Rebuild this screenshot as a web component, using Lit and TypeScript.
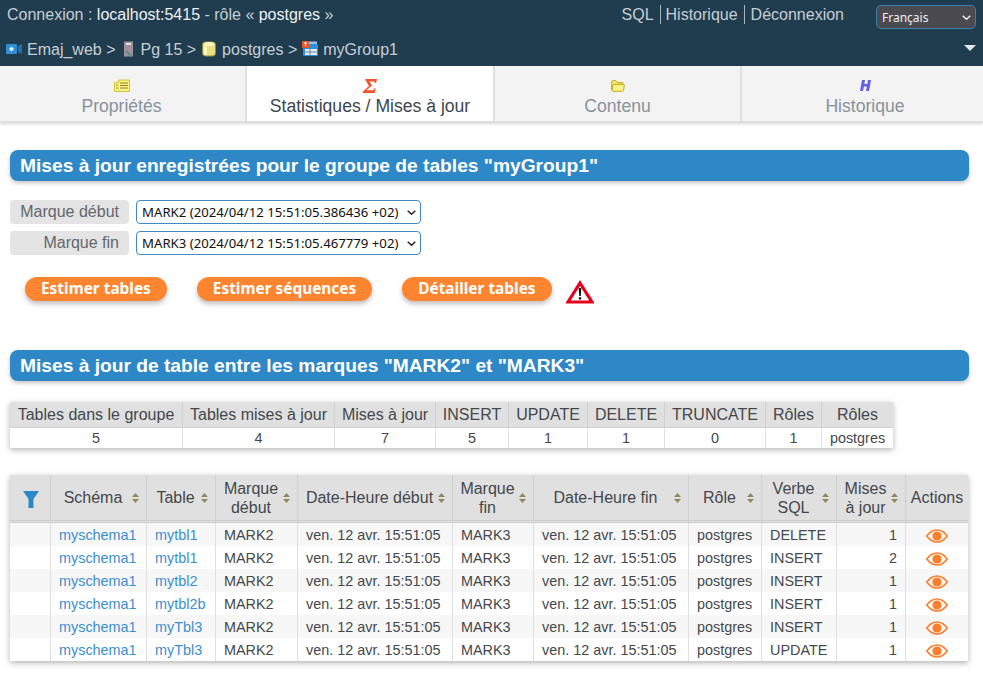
import { LitElement, html, css, svg } from 'lit';
import { customElement } from 'lit/decorators.js';

const summaryCols = [172, 152, 101, 73, 79, 77, 101, 56, 72];
const summaryHead = ['Tables dans le groupe', 'Tables mises à jour', 'Mises à jour', 'INSERT', 'UPDATE', 'DELETE', 'TRUNCATE', 'Rôles', 'Rôles'];
const summaryRow = ['5', '4', '7', '5', '1', '1', '0', '1', 'postgres'];

const detailCols = [40, 96, 69, 82, 155, 81, 155, 73, 75, 69, 63];
const rows = [
  ['mytbl1', 'DELETE', '1'],
  ['mytbl1', 'INSERT', '2'],
  ['mytbl2', 'INSERT', '1'],
  ['mytbl2b', 'INSERT', '1'],
  ['myTbl3', 'INSERT', '1'],
  ['myTbl3', 'UPDATE', '1'],
];

const sortIcon = svg`<svg class="sort" width="7" height="10" viewBox="0 0 7 10"><path d="M3.5 0 7 4H0ZM3.5 10 0 6H7Z" fill="#8f8a5e"/></svg>`;

const chevron = (color: string) => svg`<svg class="chev" width="9" height="5" viewBox="0 0 9 5"><path d="M0.7 0.7 4.5 4.2 8.3 0.7" fill="none" stroke=${color} stroke-width="1.5"/></svg>`;

const eye = svg`<svg width="22" height="14" viewBox="0 0 22 14"><path d="M0.8 7C4 2.6 7.3 1 11 1s7 1.6 10.2 6C18 11.4 14.7 13 11 13S4 11.4 0.8 7Z" fill="none" stroke="#fd7e2b" stroke-width="1.7"/><circle cx="11" cy="7" r="4.6" fill="#fd7e2b"/></svg>`;

@customElement('app-root')
export class AppRoot extends LitElement {
  static styles = css`
    :host {
      display: block;
      font-family: "Liberation Sans", Arial, sans-serif;
      color: #44484c;
      background: #fff;
      min-height: 677px;
    }
    .top {
      background: #203d50;
      height: 66px;
      box-sizing: border-box;
      color: #c6ced3;
      font-size: 16px;
      position: relative;
    }
    .line1 {
      display: flex;
      align-items: flex-start;
      height: 34px;
      padding: 5px 7px 0 7px;
      box-sizing: border-box;
    }
    .conn { flex: 1; line-height: 19px; }
    .conn b { font-weight: normal; color: #eef1f3; }
    .links {
      display: flex;
      line-height: 19px;
      margin-right: 32px;
    }
    .links span { padding: 0 6px 0 6px; }
    .links span + span { border-left: 1px solid #a9b4bb; padding-left: 5px; }
    .links span:last-child { padding-right: 0; padding-left: 6px; }
    .sel { position: relative; display: block; }
    .sel select {
      appearance: none;
      -webkit-appearance: none;
      display: block;
      font-family: "Noto Sans", sans-serif;
      box-sizing: border-box;
      padding: 0 0 0 5px;
    }
    .chev { position: absolute; right: 5px; top: 10px; pointer-events: none; }
    .lang select {
      width: 100px;
      height: 24px;
      background: #4a4a50;
      color: #f0f0f0;
      border: 1px solid #3f7fae;
      border-radius: 5px;
      font-size: 12px;
    }
    .crumbs {
      display: flex;
      align-items: center;
      height: 30px;
      padding-left: 6px;
      line-height: 19px;
    }
    .crumbs svg { flex: none; margin-right: 5px; }
    .crumbs span { margin-right: 5px; }
    .crumbs .pg { margin: 0 7px 0 2px; }
    .crumbs .db { margin: 0 6px 0 1px; }
    .collapse {
      position: absolute;
      right: 7px;
      top: 45px;
      width: 0;
      height: 0;
      border-left: 6px solid transparent;
      border-right: 6px solid transparent;
      border-top: 6px solid #e4e8ea;
    }
    .tabs {
      display: grid;
      grid-template-columns: 247px 248px 247px 1fr;
      height: 56px;
      background: #f3f3f3;
      border-bottom: 1px solid #e0e0e0;
      box-shadow: 0 2px 3px rgba(0, 0, 0, 0.16);
      box-sizing: border-box;
    }
    .tab {
      display: flex;
      flex-direction: column;
      align-items: center;
      font-size: 17.6px;
      color: #87929b;
      border-right: 2px solid #e0e0e0;
      padding-top: 9px;
      line-height: 21px;
    }
    .tab:first-child { padding-right: 2px; }
    .tab:last-child { border-right: none; padding-left: 5px; }
    .tab .ic { height: 21px; display: flex; align-items: center; }
    .tab.on { background: #fff; color: #3d4650; }
    .content { padding: 28px 14px 0 10px; }
    h2 {
      margin: 0;
      height: 31px;
      line-height: 31px;
      background: #2e88c7;
      color: #fff;
      font-size: 19.2px;
      font-weight: bold;
      border-radius: 8px;
      padding-left: 10px;
      box-shadow: 0 2px 4px rgba(0, 0, 0, 0.25);
    }
    .marks {
      display: grid;
      grid-template-columns: 119px auto;
      justify-content: start;
      column-gap: 7px;
      row-gap: 7px;
      margin-top: 19px;
    }
    .lbl {
      background: #e4e4e4;
      border-radius: 4px;
      height: 24px;
      line-height: 24px;
      text-align: right;
      padding-right: 10px;
      font-size: 16px;
      color: #63676b;
      box-sizing: border-box;
    }
    .marks select {
      width: 285px;
      height: 24px;
      background: #fff;
      color: #111;
      border: 1px solid #3f8ac4;
      border-radius: 4px;
      font-size: 13.2px;
    }
    .btns {
      display: flex;
      align-items: flex-start;
      margin: 22px 0 0 15px;
      height: 26px;
    }
    .btn {
      background: #fd8530;
      color: #fff;
      font-family: "Noto Sans", sans-serif;
      font-weight: bold;
      font-size: 15.4px;
      height: 24px;
      line-height: 24px;
      padding: 0 16px;
      border-radius: 12px;
      margin-right: 30px;
      box-shadow: 0 3px 5px rgba(0, 0, 0, 0.25);
    }
    .btn.last { margin-right: 14px; }
    .warn { margin-top: 3px; }
    .sec2 { margin-top: 47px; }
    table {
      border-collapse: separate;
      border-spacing: 0;
      table-layout: fixed;
      font-size: 14.4px;
      box-shadow: 0 2px 6px rgba(0, 0, 0, 0.3);
      background: #fff;
    }
    th {
      background: #e0e0e0;
      font-weight: normal;
      color: #44484c;
      border-left: 1px solid #cfcfcf;
      padding: 0;
      font-size: 16px;
    }
    td {
      border-left: 1px solid #e0e0e0;
      padding: 0;
    }
    th:first-child, td:first-child { border-left: none; }
    .summary { margin-top: 21px; }
    .summary th { height: 25px; border-bottom: 1px solid #cfcfcf; text-align: center; }
    .summary td { height: 20px; line-height: 20px; text-align: center; }
    .detail { margin-top: 27px; }
    .detail th {
      line-height: 19px;
      height: 45px;
      border-bottom: 3px double #cfcfcf;
      text-align: center;
    }
    .detail td { height: 23px; padding: 0 8px; white-space: nowrap; }
    .detail td.num { text-align: right; }
    .detail td.act { text-align: center; padding: 0; }
    .detail td svg { display: block; margin: 2px auto 0; }
    .detail tr.odd td { background: #f7f7f7; }
    .hc { display: flex; align-items: center; gap: 4px; padding: 0 7px; white-space: nowrap; }
    .hc div { flex: 1; }
    .sort { flex: none; }
    a { color: #3b8fd0; text-decoration: none; }
    .filter { display: block; margin: 3px 0 0 13px; }
  `;

  render() {
    return html`
      <div class="top">
        <div class="line1">
          <div class="conn">Connexion : <b>localhost:5415</b> - rôle « <b>postgres</b> »</div>
          <div class="links"><span>SQL</span><span>Historique</span><span>Déconnexion</span></div>
          <div class="sel lang"><select><option>Français</option></select>${chevron('#f0f0f0')}</div>
        </div>
        <div class="crumbs">
          <svg width="16" height="12" viewBox="0 0 16 12"><rect x="0" y="1" width="11" height="10" rx="1" fill="#2e8fd6"/><path d="M3 6 5.5 3.5V8.5ZM8 6 5.5 3.5V8.5Z" fill="#e8f2fa"/><path d="M12 3 16 1V11L12 9Z" fill="#2a6f9f"/></svg>
          <span>Emaj_web &gt;</span>
          <svg class="pg" width="11" height="16" viewBox="0 0 11 16"><rect x="1" y="0.5" width="9" height="15" fill="#a38f99"/><rect x="3" y="2" width="5" height="2" fill="#e6dfe3"/><path d="M3 10 8 15" stroke="#4f8f90" stroke-width="2"/></svg>
          <span>Pg 15 &gt;</span>
          <svg class="db" width="14" height="16" viewBox="0 0 14 16"><rect x="0.5" y="1" width="13" height="14" rx="3" fill="#e9df80" stroke="#8f8a40"/><ellipse cx="7" cy="3" rx="5.5" ry="2" fill="#fbf6c4"/><rect x="2" y="5" width="3" height="9" fill="#fbf6c4"/></svg>
          <span>postgres &gt;</span>
          <svg width="16" height="16" viewBox="0 0 16 16"><rect x="3" y="0.5" width="12" height="4" fill="#8cc6ee"/><rect x="1" y="3" width="15" height="12" rx="1" fill="#2f8fd8"/><rect x="3" y="8" width="12" height="6" fill="#e4e9ec"/><path d="M3 11H15M8 8V14" stroke="#6b8797"/><rect x="0" y="0" width="7" height="7" rx="1" fill="#f0562e"/><path d="M2 2H5M3.5 2V5" stroke="#fff"/></svg>
          <span>myGroup1</span>
        </div>
        <div class="collapse"></div>
      </div>

      <div class="tabs">
        <div class="tab">
          <div class="ic"><svg width="16" height="13" viewBox="0 0 16 13"><path d="M0.5 3.5H4.5V1H15.5V12.5H0.5Z" fill="#fbf28a" stroke="#d6c42a"/><path d="M6 4H14M6 6.5H14M6 9H14M2 6H4M2 9H4" stroke="#8f8620"/></svg></div>
          Propriétés
        </div>
        <div class="tab on">
          <div class="ic"><svg width="16" height="16" viewBox="0 0 16 16"><path d="M3 1H15L14 5H12.5L12.8 3.4H7.5L10 7.5 4.5 12.2H11.5L12 10.5H13.6L12.6 15H0.5L1 13.5 7 8 4 3Z" fill="#f4552c"/></svg></div>
          Statistiques / Mises à jour
        </div>
        <div class="tab">
          <div class="ic"><svg width="14" height="12" viewBox="0 0 14 12"><path d="M0.7 9.5V2Q0.7 0.7 2 0.7H5L6.5 2.5H11Q12 2.5 12 3.5V4.5H3Q2 4.5 2 5.5Z" fill="#f4e97a" stroke="#c4a916"/><path d="M1 10.5 2 5Q2.2 4.3 3 4.3H12.5Q13.5 4.3 13.3 5.3L12.5 10.3Q12.3 11.3 11.3 11.3H2Q1 11.3 1 10.5Z" fill="#fbf28a" stroke="#c4a916"/></svg></div>
          Contenu
        </div>
        <div class="tab">
          <div class="ic"><svg width="13" height="13" viewBox="0 0 13 13"><path d="M3 1H6L5.4 5H8.4L9 1H12L10 12H7L7.8 7.5H4.9L4 12H1Z" fill="#6262e6"/></svg></div>
          Historique
        </div>
      </div>

      <div class="content">
        <h2>Mises à jour enregistrées pour le groupe de tables "myGroup1"</h2>

        <div class="marks">
          <div class="lbl">Marque début</div>
          <div class="sel"><select><option>MARK2 (2024/04/12 15:51:05.386436 +02)</option></select>${chevron('#222')}</div>
          <div class="lbl">Marque fin</div>
          <div class="sel"><select><option>MARK3 (2024/04/12 15:51:05.467779 +02)</option></select>${chevron('#222')}</div>
        </div>

        <div class="btns">
          <div class="btn">Estimer tables</div>
          <div class="btn">Estimer séquences</div>
          <div class="btn last">Détailler tables</div>
          <svg class="warn" width="28" height="24" viewBox="0 0 28 24"><path d="M14 3 26 22H2Z" fill="#fff" stroke="#e2001a" stroke-width="3.2" stroke-linejoin="miter"/><path d="M12.7 8H15.3L14.8 16H13.2ZM12.8 17.2H15.2V19.6H12.8Z" fill="#111"/></svg>
        </div>

        <h2 class="sec2">Mises à jour de table entre les marques "MARK2" et "MARK3"</h2>

        <table class="summary" style="width:${summaryCols.reduce((a, b) => a + b, 0)}px">
          <colgroup>${summaryCols.map((w) => html`<col style="width:${w}px" />`)}</colgroup>
          <tr>${summaryHead.map((h) => html`<th>${h}</th>`)}</tr>
          <tr>${summaryRow.map((c) => html`<td>${c}</td>`)}</tr>
        </table>

        <table class="detail" style="width:${detailCols.reduce((a, b) => a + b, 0)}px">
          <colgroup>${detailCols.map((w) => html`<col style="width:${w}px" />`)}</colgroup>
          <tr>
            <th><svg class="filter" width="16" height="17" viewBox="0 0 16 17"><path d="M0 0H16L10.5 8V17H5.5V8Z" fill="#2e88c7"/></svg></th>
            <th><div class="hc"><div>Schéma</div>${sortIcon}</div></th>
            <th><div class="hc"><div>Table</div>${sortIcon}</div></th>
            <th><div class="hc"><div>Marque<br />début</div>${sortIcon}</div></th>
            <th><div class="hc"><div>Date-Heure début</div>${sortIcon}</div></th>
            <th><div class="hc"><div>Marque<br />fin</div>${sortIcon}</div></th>
            <th><div class="hc"><div>Date-Heure fin</div>${sortIcon}</div></th>
            <th><div class="hc"><div>Rôle</div>${sortIcon}</div></th>
            <th><div class="hc"><div>Verbe<br />SQL</div>${sortIcon}</div></th>
            <th><div class="hc"><div>Mises<br />à jour</div>${sortIcon}</div></th>
            <th>Actions</th>
          </tr>
          ${rows.map(
            (r, i) => html`
              <tr class=${i % 2 === 0 ? 'odd' : ''}>
                <td></td>
                <td><a>myschema1</a></td>
                <td><a>${r[0]}</a></td>
                <td>MARK2</td>
                <td>ven. 12 avr. 15:51:05</td>
                <td>MARK3</td>
                <td>ven. 12 avr. 15:51:05</td>
                <td>postgres</td>
                <td>${r[1]}</td>
                <td class="num">${r[2]}</td>
                <td class="act">${eye}</td>
              </tr>
            `
          )}
        </table>
      </div>
    `;
  }
}
